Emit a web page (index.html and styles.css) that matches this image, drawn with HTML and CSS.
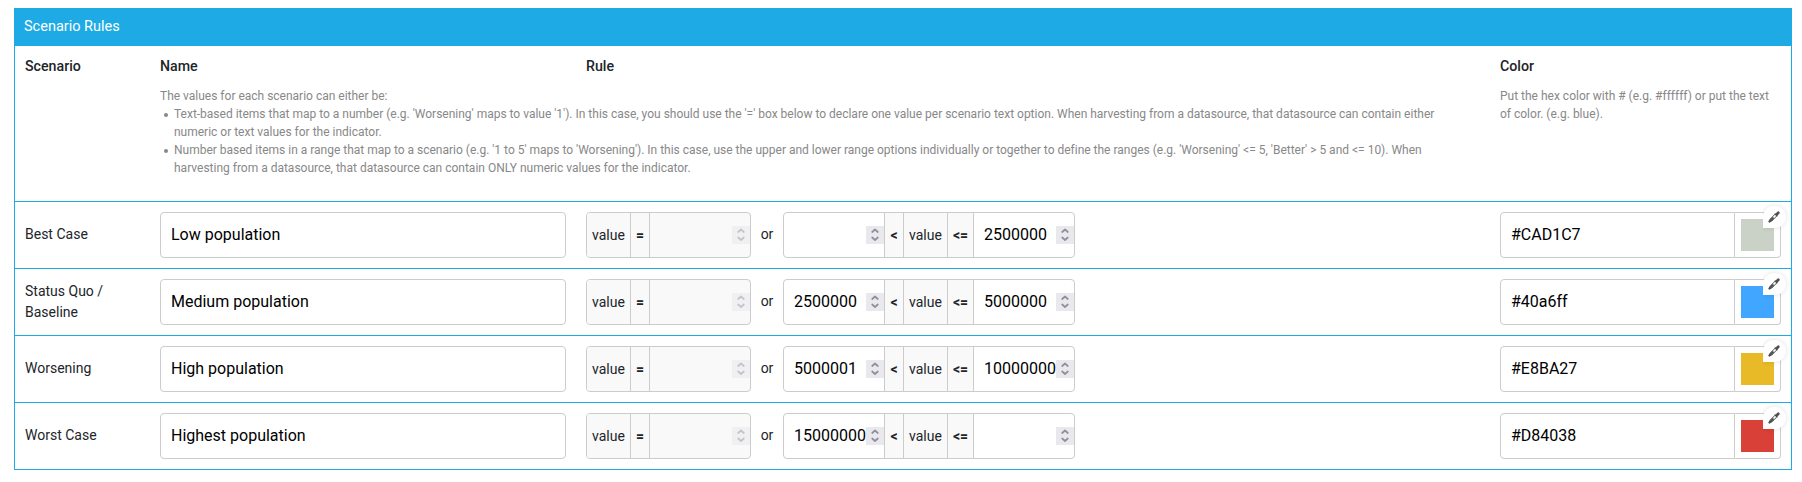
FILE: index.html
```html
<!DOCTYPE html>
<html lang="en">
<head>
<meta charset="utf-8">
<title>Scenario Rules</title>
<link rel="stylesheet" href="styles.css">
</head>
<body>
<svg class="defs" width="0" height="0">
  <symbol id="spin" viewBox="0 0 18 18"><path d="M6.2 6 L9 3.5 L11.8 6 M6.2 11.5 L9 14 L11.8 11.5" fill="none" stroke="currentColor" stroke-width="1.7" stroke-linecap="round" stroke-linejoin="round"/></symbol>
  <symbol id="dropper" viewBox="0 0 12 12"><path d="M1.3 10.7 L2 8.3 L7.3 3" fill="none" stroke="#505050" stroke-width="1" stroke-linejoin="round"/><path d="M1.3 10.7 L3.8 10 L9 4.7" fill="none" stroke="#505050" stroke-width="1" stroke-linejoin="round"/><path d="M1.5 10.5 L4.8 7.2" stroke="#505050" stroke-width="2.2" stroke-linecap="round"/><path d="M7.2 3 L9 4.8" stroke="#505050" stroke-width="1.3" stroke-linecap="round"/><path d="M8.8 3.2 L10.3 1.7" stroke="#505050" stroke-width="2.7" stroke-linecap="round"/></symbol>
</svg>
<section class="rules">
  <h1 class="title">Scenario Rules</h1>
  <div class="row head">
    <div class="label">Scenario</div>
    <div class="head-main">
      <div class="head-cols"><div>Name</div><div>Rule</div></div>
      <div class="help">The values for each scenario can either be:
        <ul>
          <li>Text-based items that map to a number (e.g. 'Worsening' maps to value '1'). In this case, you should use the '=' box below to declare one value per scenario text option. When harvesting from a datasource, that datasource can contain either numeric or text values for the indicator.</li>
          <li>Number based items in a range that map to a scenario (e.g. '1 to 5' maps to 'Worsening'). In this case, use the upper and lower range options individually or together to define the ranges (e.g. 'Worsening' &lt;= 5, 'Better' &gt; 5 and &lt;= 10). When harvesting from a datasource, that datasource can contain ONLY numeric values for the indicator.</li>
        </ul>
      </div>
    </div>
    <div class="color-col"><div>Color</div><div class="help">Put the hex color with # (e.g. #ffffff) or put the text of color. (e.g. blue).</div></div>
  </div>

  <div class="row">
    <div class="label">Best Case</div>
    <input class="name" value="Low population">
    <div class="rule">
      <div class="group off"><span class="word">value</span><span class="op">=</span><span class="num"><b></b><svg class="spin"><use href="#spin"/></svg></span></div>
      <span class="or">or</span>
      <div class="group"><span class="num"><b></b><svg class="spin"><use href="#spin"/></svg></span><span class="op">&lt;</span><span class="word">value</span><span class="op wide">&lt;=</span><span class="num"><b>2500000</b><svg class="spin"><use href="#spin"/></svg></span></div>
    </div>
    <div class="color"><input class="hex" value="#CAD1C7"><div class="pick"><div class="swatch sage"></div><span class="badge"><svg width="12" height="12"><use href="#dropper"/></svg></span></div></div>
  </div>

  <div class="row">
    <div class="label two-line">Status Quo / Baseline</div>
    <input class="name" value="Medium population">
    <div class="rule">
      <div class="group off"><span class="word">value</span><span class="op">=</span><span class="num"><b></b><svg class="spin"><use href="#spin"/></svg></span></div>
      <span class="or">or</span>
      <div class="group"><span class="num"><b>2500000</b><svg class="spin"><use href="#spin"/></svg></span><span class="op">&lt;</span><span class="word">value</span><span class="op wide">&lt;=</span><span class="num"><b>5000000</b><svg class="spin"><use href="#spin"/></svg></span></div>
    </div>
    <div class="color"><input class="hex" value="#40a6ff"><div class="pick"><div class="swatch blue"></div><span class="badge"><svg width="12" height="12"><use href="#dropper"/></svg></span></div></div>
  </div>

  <div class="row">
    <div class="label">Worsening</div>
    <input class="name" value="High population">
    <div class="rule">
      <div class="group off"><span class="word">value</span><span class="op">=</span><span class="num"><b></b><svg class="spin"><use href="#spin"/></svg></span></div>
      <span class="or">or</span>
      <div class="group"><span class="num"><b>5000001</b><svg class="spin"><use href="#spin"/></svg></span><span class="op">&lt;</span><span class="word">value</span><span class="op wide">&lt;=</span><span class="num"><b>10000000</b><svg class="spin"><use href="#spin"/></svg></span></div>
    </div>
    <div class="color"><input class="hex" value="#E8BA27"><div class="pick"><div class="swatch gold"></div><span class="badge"><svg width="12" height="12"><use href="#dropper"/></svg></span></div></div>
  </div>

  <div class="row">
    <div class="label">Worst Case</div>
    <input class="name" value="Highest population">
    <div class="rule">
      <div class="group off"><span class="word">value</span><span class="op">=</span><span class="num"><b></b><svg class="spin"><use href="#spin"/></svg></span></div>
      <span class="or">or</span>
      <div class="group"><span class="num"><b>15000000</b><svg class="spin"><use href="#spin"/></svg></span><span class="op">&lt;</span><span class="word">value</span><span class="op wide">&lt;=</span><span class="num"><b></b><svg class="spin"><use href="#spin"/></svg></span></div>
    </div>
    <div class="color"><input class="hex" value="#D84038"><div class="pick"><div class="swatch red"></div><span class="badge"><svg width="12" height="12"><use href="#dropper"/></svg></span></div></div>
  </div>
</section>
</body>
</html>
```
FILE: styles.css
```css
* { box-sizing: border-box; }
body { margin: 0; background: #fff; color: #212529; font: 14px/21px Roboto, sans-serif; overflow: hidden; }
.defs { position: absolute; }
.rules { width: 1778px; margin: 8px 0 0 14px; border: 1px solid #1eaae4; border-top: 0; }
.title { margin: 0; height: 38px; padding: 8px 9px; background: #1eaae4; color: #fff; font-size: 14.5px; font-weight: 400; line-height: 21px; }
.row { height: 67px; display: grid; grid-template-columns: 135px 406px 934px 281px; padding-left: 10px; border-top: 1px solid #1eaae4; align-items: center; }
.row .rule { margin-left: 20px; }
.row.head { height: 155px; border-top: 0; grid-template-columns: 135px 1340px 281px; align-items: start; padding-top: 10px; font-weight: 500; font-size: 14.2px; }
.label { width: 100px; padding-bottom: 2px; }
.two-line { padding-bottom: 0; }
.head-cols { display: grid; grid-template-columns: 426px 1fr; }
.help { margin-top: 10px; font-size: 12px; line-height: 18px; font-weight: 400; color: #888; }
.head-main .help { width: 1290px; letter-spacing: -.005px; }
.help ul { margin: 0; padding: 0; list-style: none; }
.help li { display: flex; gap: 6px; padding-left: 4px; }
.help li::before { content: ""; flex: none; width: 4px; height: 4px; margin-top: 8px; border-radius: 50%; background: #888; }
.name, .hex { height: 46px; border: 1px solid #ccc; border-radius: 4px; padding: 0 10px 2px; font: 16px Roboto, sans-serif; color: #000; background: #fff; outline: 0; }
.name { width: 406px; }
.rule { display: flex; align-items: center; }
.group { display: flex; height: 46px; border: 1px solid #ccc; border-radius: 4px; overflow: hidden; background: #fff; }
.word, .op { display: flex; align-items: center; justify-content: center; background: #f9f9f9; border-right: 1px solid #ccc; }
.word { width: 44px; }
.op { width: 19px; font-weight: 700; }
.wide { width: 26px; }
.num { width: 100px; display: flex; align-items: center; padding-left: 10px; color: #000; font-size: 16px; }
.num b { width: 72px; padding-bottom: 2px; font-weight: 400; overflow: hidden; }
.spin { width: 18px; height: 18px; flex: none; background: #e9e9ed; color: #8f8f9d; }
.num + .op { border-left: 1px solid #ccc; width: 20px; }
.off { background: #f9f9f9; }
.off .spin { opacity: .5; }
.or { width: 32px; padding-bottom: 2px; text-align: center; }
.color { display: flex; }
.hex { width: 235px; border-radius: 4px 0 0 4px; }
.pick { position: relative; width: 46px; height: 46px; border: 1px solid #ccc; border-left: 0; border-radius: 0 4px 4px 0; padding: 6px; }
.swatch { width: 33px; height: 32px; }
.sage { background: #cad1c7; }
.blue { background: #40a6ff; }
.gold { background: #e8ba27; }
.red { background: #d84038; }
.badge { position: absolute; top: -7px; right: -6px; width: 23px; height: 22px; display: flex; align-items: center; padding-left: 5px; background: #fff; border-radius: 11px 11px 11px 0; box-shadow: 0 0 5px rgba(0,0,0,.12); clip-path: inset(-6px -6px -6px 0); }
```
